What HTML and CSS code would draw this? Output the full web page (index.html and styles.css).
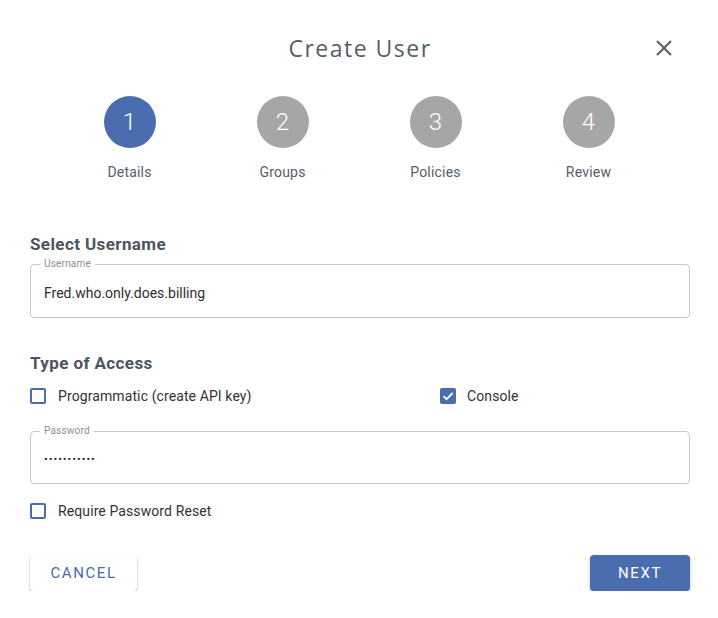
FILE: index.html
```html
<!DOCTYPE html>
<html>
<head>
<meta charset="utf-8">
<link rel="stylesheet" href="styles.css">
</head>
<body>
<div class="dialog">
  <header class="head">
    <h1 class="title">Create User</h1>
    <button class="close" aria-label="Close">
      <svg width="18" height="18" viewBox="0 0 18 18"><path d="M2 2L16 16M16 2L2 16" stroke="#555e69" stroke-width="2" fill="none"/></svg>
    </button>
  </header>
  <ol class="steps">
    <li class="step active"><span class="num">1</span><span class="lbl">Details</span></li>
    <li class="step"><span class="num">2</span><span class="lbl">Groups</span></li>
    <li class="step"><span class="num">3</span><span class="lbl">Policies</span></li>
    <li class="step"><span class="num">4</span><span class="lbl">Review</span></li>
  </ol>

  <h2 class="section first">Select Username</h2>
  <fieldset class="field">
    <legend>Username</legend>
    <div class="value">Fred.who.only.does.billing</div>
  </fieldset>

  <h2 class="section second">Type of Access</h2>
  <div class="access">
    <label class="check"><span class="box"></span>Programmatic (create API key)</label>
    <label class="check"><span class="box on"><svg width="16" height="16" viewBox="0 0 16 16"><path d="M3.5 8.2L6.6 11.2L12.6 5" stroke="#fff" stroke-width="1.8" fill="none"/></svg></span>Console</label>
  </div>
  <fieldset class="field pw">
    <legend>Password</legend>
    <div class="value dots">•••••••••••</div>
  </fieldset>
  <label class="check reset"><span class="box"></span>Require Password Reset</label>

  <div class="actions">
    <button class="btn cancel">CANCEL</button>
    <button class="btn next">NEXT</button>
  </div>
</div>
</body>
</html>
```
FILE: styles.css
```css
* { box-sizing: border-box; }
body {
  margin: 0;
  background: #fff;
  font-family: Roboto, "Liberation Sans", sans-serif;
  color: #333;
}
.dialog {
  width: 718px;
  padding: 0 28px 0 30px;
}
.head {
  position: relative;
  height: 96px;
  display: flex;
  justify-content: center;
  padding-top: 33px;
}
.title {
  margin: 0;
  font-family: "Open Sans", "Noto Sans", sans-serif;
  font-weight: 400;
  font-size: 23px;
  line-height: 30px;
  letter-spacing: 1.5px;
  color: #555e69;
}
.close {
  position: absolute;
  right: 17px;
  top: 39px;
  border: 0;
  background: none;
  padding: 0;
  width: 18px;
  height: 18px;
  cursor: pointer;
}
.steps {
  list-style: none;
  margin: 0;
  padding: 0;
  display: grid;
  grid-template-columns: repeat(4, 153px);
  justify-content: center;
  margin-left: -2px;
}
.step {
  display: flex;
  flex-direction: column;
  align-items: center;
}
.num {
  width: 52px;
  height: 52px;
  border-radius: 50%;
  background: #a6a6a6;
  color: #fff;
  font-size: 24px;
  font-weight: 300;
  display: flex;
  align-items: center;
  justify-content: center;
}
.step.active .num { background: #4a6daf; }
.lbl {
  margin-top: 16px;
  font-size: 14px;
  line-height: 16px;
  color: #555e69;
  letter-spacing: 0.2px;
}
.section {
  margin: 0;
  font-size: 17px;
  font-weight: 700;
  color: #4b5460;
  line-height: 20px;
  letter-spacing: 0.4px;
}
.section.first { margin-top: 54px; }
.section.second { margin-top: 35px; }
.field {
  margin: 4px 0 0;
  padding: 0 13px 0 13px;
  border: 1px solid #c8c8c8;
  border-radius: 4px;
  height: 60px;
}
.field legend {
  font-size: 10px;
  line-height: 12px;
  color: #8a8f96;
  padding: 0 4px;
  margin-left: -4px;
  letter-spacing: 0.2px;
}
.value {
  font-size: 14px;
  line-height: 16px;
  color: #2f2f2f;
  padding-top: 15px;
}
.value.dots {
  font-size: 11px;
  letter-spacing: 1px;
  padding-top: 15px;
}
.access {
  display: grid;
  grid-template-columns: 410px 1fr;
  margin-top: 14px;
}
.check {
  display: flex;
  align-items: center;
  font-size: 14px;
  line-height: 18px;
  color: #333;
  letter-spacing: 0.1px;
}
.box {
  width: 16px;
  height: 16px;
  border: 2px solid #4a6daf;
  border-radius: 2px;
  margin-right: 12px;
  flex: none;
  display: flex;
}
.box.on {
  border: 0;
  background: #4a6daf;
  margin-right: 11px;
}
.field.pw { margin-top: 20px; height: 59px; }
.reset { margin-top: 18px; }
.actions {
  display: flex;
  justify-content: space-between;
  margin-top: 35px;
}
.btn {
  font-family: Roboto, "Liberation Sans", sans-serif;
  font-size: 15px;
  letter-spacing: 1.6px;
  height: 36px;
  border: 0;
  border-radius: 4px;
  padding: 0 20px;
  cursor: pointer;
  box-shadow: 0 1px 3px rgba(0,0,0,0.22), 0 2px 2px rgba(0,0,0,0.12);
}
.cancel {
  background: #fff;
  color: #4a6daf;
  width: 107px;
}
.next {
  background: #4a6daf;
  color: #fff;
  width: 100px;
}
```
